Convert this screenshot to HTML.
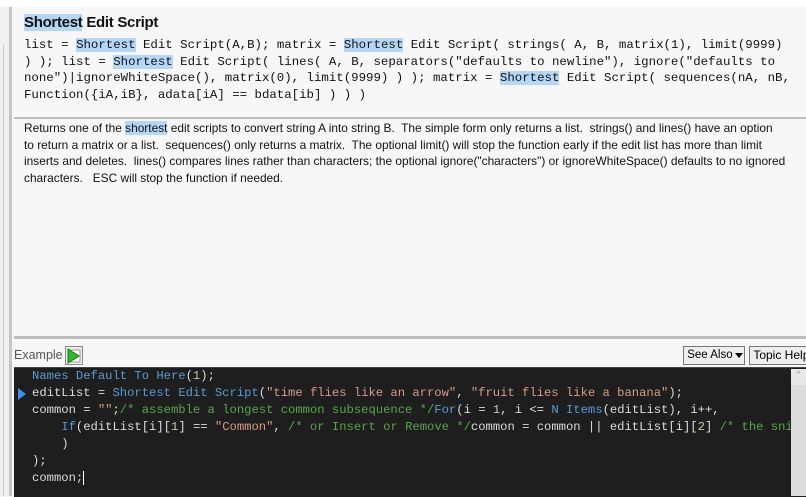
<!DOCTYPE html>
<html><head><meta charset="utf-8"><style>
body{margin:0;width:806px;height:496px;overflow:hidden;background:#f7f7f7;position:relative;font-family:"Liberation Sans",sans-serif}
.abs{position:absolute}
.hl{background:#b5d7f7}
.mono{font-family:"Liberation Mono",monospace;white-space:pre}
.code span.k{color:#569cd6}.code .s{color:#d69d85}.code .c{color:#57a64a}.code .n{color:#b5cea8}
</style></head><body>
<div class="abs" style="left:0;top:0;width:806px;height:7px;background:#fff"></div>
<div class="abs" style="left:0;top:7px;width:9px;height:489px;background:#f0f0f0"></div>
<div class="abs" style="left:0;top:45px;width:3px;height:451px;border-right:1px solid #c8c8c8"></div>
<div class="abs" style="left:9px;top:7px;width:3px;height:489px;background:#c4c4c4"></div>
<div class="abs" style="left:24px;top:14px;font-weight:bold;font-size:15px;color:#111;letter-spacing:-0.3px"><span class="hl">Shortest</span> Edit Script</div>
<div class="abs mono" style="left:24px;top:37px;font-size:12.4px;line-height:16.5px;color:#111">list = <span class="hl">Shortest</span> Edit Script(A,B); matrix = <span class="hl">Shortest</span> Edit Script( strings( A, B, matrix(1), limit(9999)
) ); list = <span class="hl">Shortest</span> Edit Script( lines( A, B, separators("defaults to newline"), ignore("defaults to
none")|ignoreWhiteSpace(), matrix(0), limit(9999) ) ); matrix = <span class="hl">Shortest</span> Edit Script( sequences(nA, nB,
Function({iA,iB}, adata[iA] == bdata[ib] ) ) )</div>
<div class="abs" style="left:14px;top:117px;width:792px;height:2px;background:#bdbdbd"></div>
<div class="abs" style="left:24px;top:120px;font-size:11.9px;line-height:16.7px;color:#111;white-space:pre">Returns one of the <span class="hl">shortest</span> edit scripts to convert string A into string B.  The simple form only returns a list.  strings() and lines() have an option
to return a matrix or a list.  sequences() only returns a matrix.  The optional limit() will stop the function early if the edit list has more than limit
inserts and deletes.  lines() compares lines rather than characters; the optional ignore("characters") or ignoreWhiteSpace() defaults to no ignored
characters.   ESC will stop the function if needed.</div>
<div class="abs" style="left:14px;top:336px;width:792px;height:3px;background:#bdbdbd"></div>
<div class="abs" style="left:14px;top:348px;font-size:12.5px;color:#555">Example</div>
<div class="abs" style="left:65px;top:346px;width:16px;height:17px;border:1px solid #888;background:#eee"><svg width="16" height="17"><rect x="5" y="3" width="9" height="12" fill="#fff" stroke="#999"/><path d="M2 2 L13 9 L2 16Z" fill="#2db82d" stroke="#0a7a0a"/></svg></div>
<div class="abs" style="left:683px;top:346px;width:60px;height:17px;border:1px solid #777;background:#eee;font-size:11.5px;line-height:17px;color:#000">&nbsp;See Also</div>
<div class="abs" style="left:735px;top:353px;width:0;height:0;border-left:4px solid transparent;border-right:4px solid transparent;border-top:5px solid #000"></div>
<div class="abs" style="left:749px;top:346px;width:70px;height:17px;border:1px solid #777;background:#eee;font-size:12px;line-height:17px;color:#000">&nbsp;Topic Help</div>
<div class="abs" style="left:14px;top:367px;width:792px;height:129px;background:#1e1e1e;border-top:1px solid #444"></div>
<div class="abs" style="left:791px;top:369px;width:15px;height:127px;background:#dcdcdc"></div>
<div class="abs" style="left:791px;top:369px;width:15px;height:16px;background:#e8e8e8;color:#999;font-size:9px;text-align:center">^</div>
<div class="abs" style="left:18px;top:388px;width:0;height:0;border-top:6px solid transparent;border-bottom:6px solid transparent;border-left:8px solid #3b8fe8"></div>
<div class="abs mono code" style="left:32px;top:368px;width:759px;overflow:hidden;font-size:12.2px;line-height:17px;color:#dcdcdc"><span class="k">Names Default To Here</span>(<span class="n">1</span>);
editList = <span class="k">Shortest Edit Script</span>(<span class="s">"time flies like an arrow"</span>, <span class="s">"fruit flies like a banana"</span>);
common = <span class="s">""</span>;<span class="c">/* assemble a longest common subsequence */</span><span class="k">For</span>(i = <span class="n">1</span>, i &lt;= <span class="k">N Items</span>(editList), i++,
    <span class="k">If</span>(editList[i][<span class="n">1</span>] == <span class="s">"Common"</span>, <span class="c">/* or Insert or Remove */</span>common = common || editList[i][<span class="n">2</span>] <span class="c">/* the snippet */</span>
    )
);
common;<span style="border-left:1px solid #fff"></span></div>
</body></html>
